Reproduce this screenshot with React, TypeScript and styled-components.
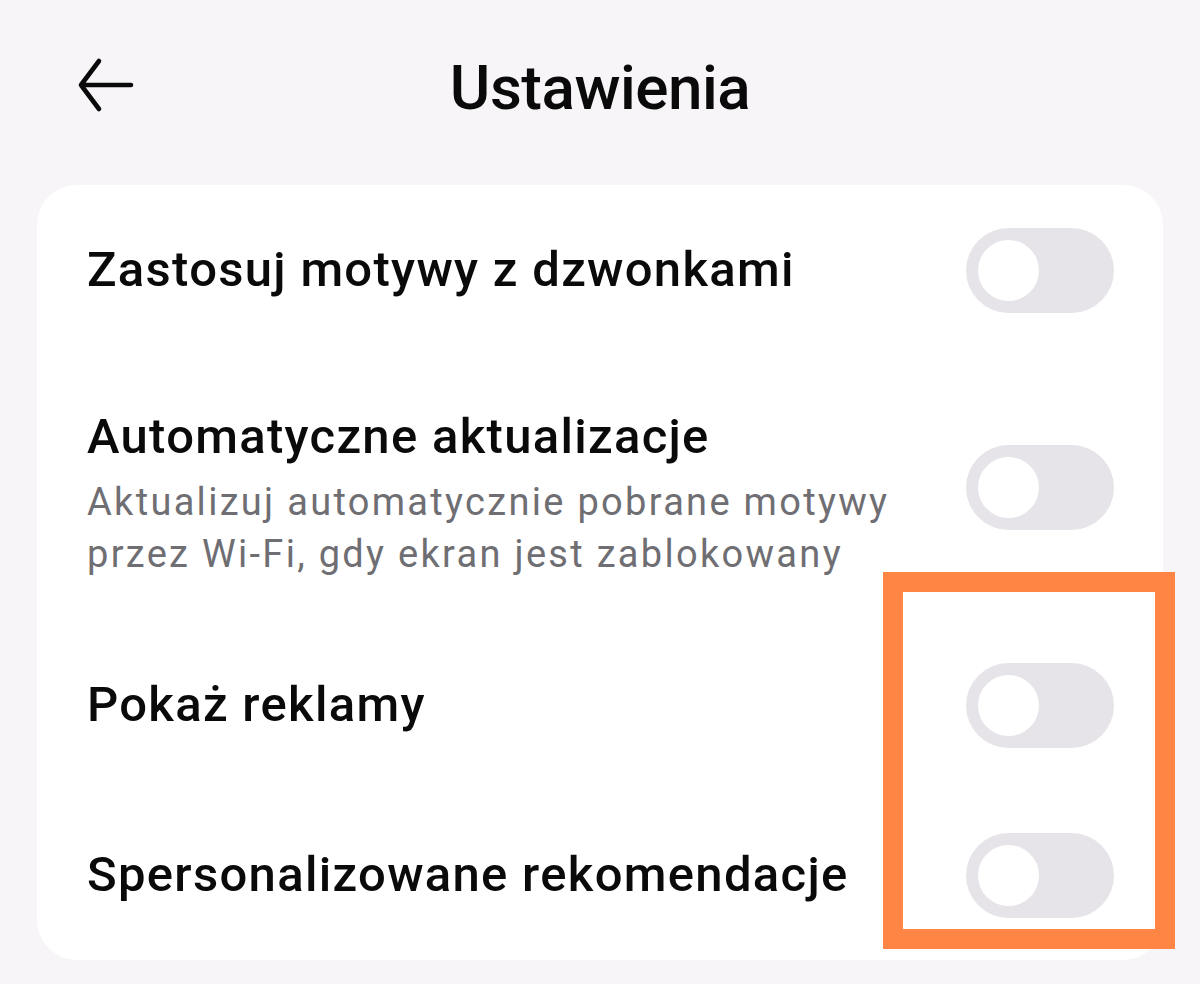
import React from 'react';
import styled, { createGlobalStyle } from 'styled-components';

const GlobalStyle = createGlobalStyle`
	html, body {
		margin: 0;
		padding: 0;
		background: #f7f5f8;
	}
	body {
		font-family: Roboto, 'Noto Sans', 'Liberation Sans', sans-serif;
		color: #0a0a0a;
	}
`;

const Page = styled.div`
	position: relative;
	width: 1200px;
	height: 984px;
	overflow: hidden;
	background: #f7f5f8;
`;

const Header = styled.div`
	position: relative;
	height: 185px;
	display: flex;
	align-items: flex-start;
	justify-content: center;
`;

const BackButton = styled.button`
	position: absolute;
	left: 78px;
	top: 57px;
	width: 56px;
	height: 56px;
	padding: 0;
	border: none;
	background: none;
	display: flex;
	align-items: center;
	justify-content: center;
`;

const Title = styled.h1`
	margin: 52px 0 0;
	font-size: 62px;
	line-height: 72px;
	font-weight: 500;
	letter-spacing: -0.5px;
	color: #0a0a0a;
`;

const Card = styled.div`
	margin: 0 37px;
	height: 775px;
	background: #fff;
	border-radius: 40px;
	display: flex;
	flex-direction: column;
`;

const Row = styled.div<{ $h: number }>`
	height: ${(p) => p.$h}px;
	padding: 0 49px 0 50px;
	display: flex;
	align-items: center;
	justify-content: space-between;
	gap: 40px;
`;

const TextBlock = styled.div<{ $shift?: number }>`
	display: flex;
	flex-direction: column;
	padding-top: ${(p) => p.$shift ?? 0}px;
`;

const RowTitle = styled.div`
	font-size: 49px;
	line-height: 58px;
	font-weight: 500;
	color: #0a0a0a;
	letter-spacing: 1.3px;
	white-space: nowrap;
`;

const RowSub = styled.div`
	margin-top: 10px;
	font-size: 38px;
	line-height: 52px;
	font-weight: 400;
	color: #6f6e73;
	letter-spacing: 2.3px;
	max-width: 830px;
`;

const Track = styled.div`
	flex: none;
	width: 148px;
	height: 85px;
	border-radius: 43px;
	background: #e6e4e8;
	display: flex;
	align-items: center;
	padding-left: 12px;
	box-sizing: border-box;
`;

const Knob = styled.div`
	width: 61px;
	height: 61px;
	border-radius: 50%;
	background: #fff;
`;

const Highlight = styled.div`
	position: absolute;
	left: 883px;
	top: 572px;
	width: 292px;
	height: 377px;
	box-sizing: border-box;
	border: 20px solid #ff8545;
	pointer-events: none;
`;

function Toggle() {
	return (
		<Track>
			<Knob />
		</Track>
	);
}

const rows = [
	{ title: 'Zastosuj motywy z dzwonkami', h: 170 },
	{
		title: 'Automatyczne aktualizacje',
		sub: 'Aktualizuj automatycznie pobrane motywy przez Wi-Fi, gdy ekran jest zablokowany',
		h: 265,
		shift: 13,
	},
	{ title: 'Pokaż reklamy', h: 170 },
	{ title: 'Spersonalizowane rekomendacje', h: 170 },
];

export default function App() {
	return (
		<Page>
			<GlobalStyle />
			<Header>
				<BackButton aria-label='Wstecz'>
					<svg width='56' height='56' viewBox='0 0 56 56' fill='none'>
						<path
							d='M3 28 H53 M21 4 L3 28 L21 52'
							stroke='#0a0a0a'
							strokeWidth='4.6'
							strokeLinecap='round'
							strokeLinejoin='round'
						/>
					</svg>
				</BackButton>
				<Title>Ustawienia</Title>
			</Header>
			<Card>
				{rows.map((r) => (
					<Row key={r.title} $h={r.h}>
						<TextBlock $shift={r.shift}>
							<RowTitle>{r.title}</RowTitle>
							{r.sub && <RowSub>{r.sub}</RowSub>}
						</TextBlock>
						<Toggle />
					</Row>
				))}
			</Card>
			<Highlight />
		</Page>
	);
}
